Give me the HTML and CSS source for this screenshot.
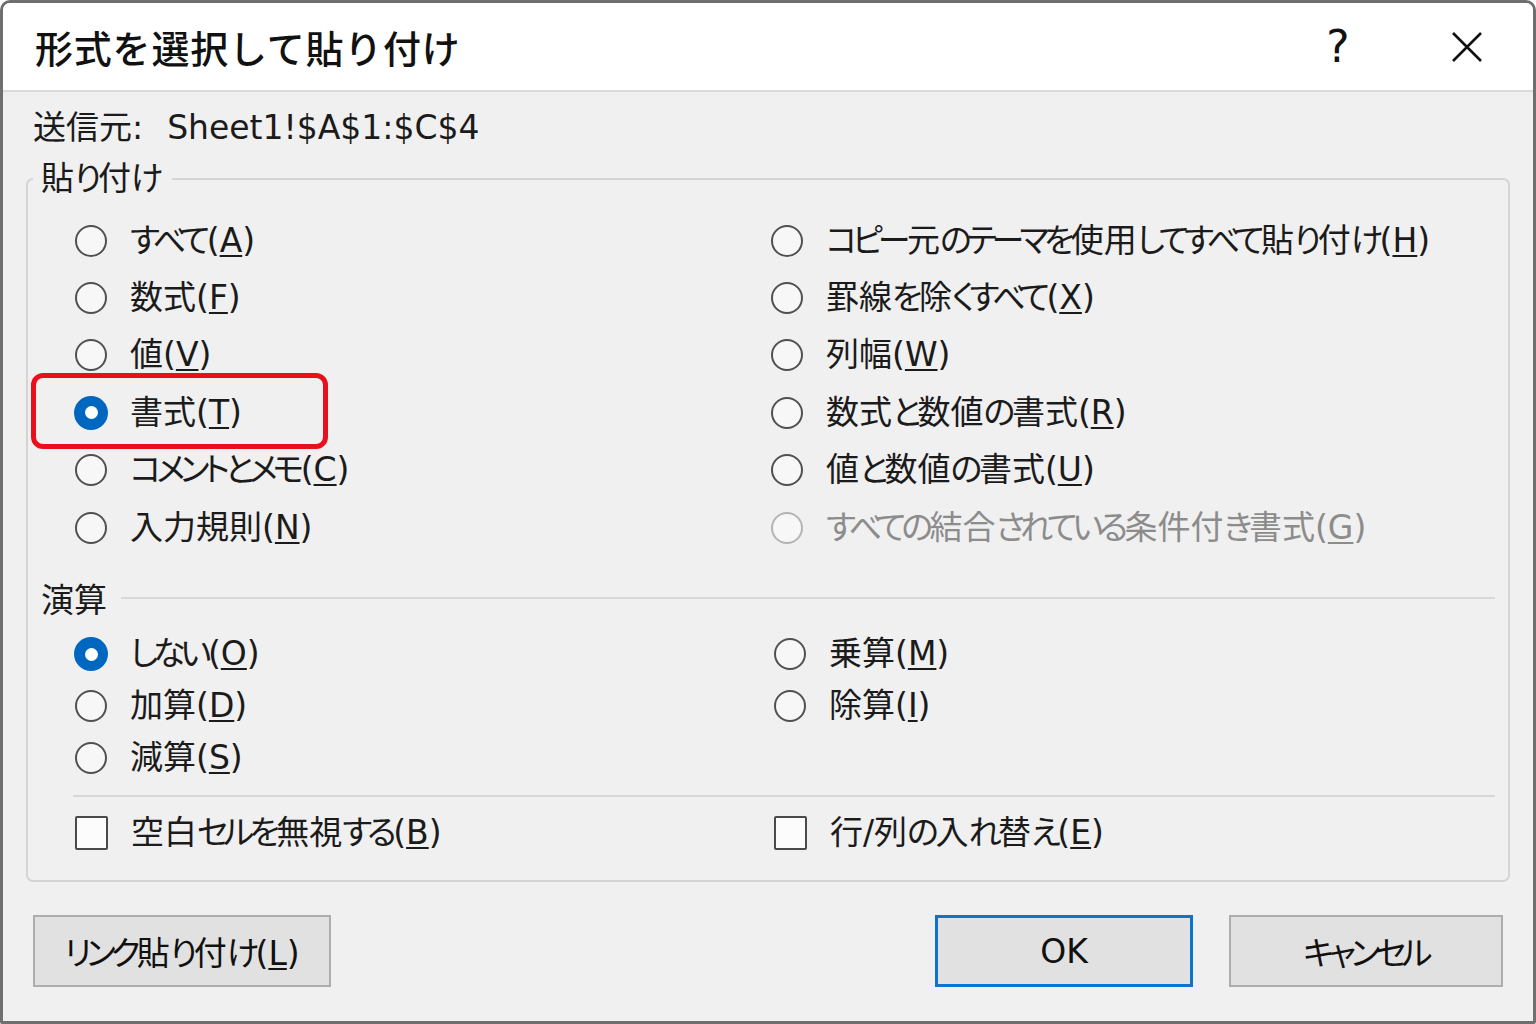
FILE: index.html
```html
<!DOCTYPE html>
<html lang="ja">
<head>
<meta charset="utf-8">
<title>形式を選択して貼り付け</title>
<link rel="stylesheet" href="styles.css">
</head>
<body>
<div class="dialog">
  <div class="titlebar">
    <div class="title">形式を選択して貼り付け</div>
    <div class="title-btns">
      <span class="help">?</span>
      <span class="close"><svg width="32" height="32" viewBox="0 0 32 32"><path d="M2 2 L30 30 M30 2 L2 30" stroke="#111" stroke-width="2.6" fill="none"/></svg></span>
    </div>
  </div>
  <div class="body">
    <div class="source"><span>送信元:</span><span class="src-val">Sheet1!$A$1:$C$4</span></div>
    <fieldset class="group">
      <legend>貼<span class="k">り</span>付<span class="k">け</span></legend>
      <div class="grid paste">
        <label class="opt"><span class="radio"></span><span class="txt"><span class="k">すべて</span>(<u>A</u>)</span></label>
        <label class="opt"><span class="radio"></span><span class="txt">数式(<u>F</u>)</span></label>
        <label class="opt"><span class="radio"></span><span class="txt">値(<u>V</u>)</span></label>
        <label class="opt marked"><span class="radio on"></span><span class="txt">書式(<u>T</u>)</span><span class="highlight"></span></label>
        <label class="opt"><span class="radio"></span><span class="txt"><span class="k">コメントとメモ</span>(<u>C</u>)</span></label>
        <label class="opt"><span class="radio"></span><span class="txt">入力規則(<u>N</u>)</span></label>
        <label class="opt"><span class="radio"></span><span class="txt"><span class="k">コピー</span>元<span class="k">のテーマを</span>使用<span class="k">してすべて</span>貼<span class="k">り</span>付<span class="k">け</span>(<u>H</u>)</span></label>
        <label class="opt"><span class="radio"></span><span class="txt">罫線<span class="k">を</span>除<span class="k">くすべて</span>(<u>X</u>)</span></label>
        <label class="opt"><span class="radio"></span><span class="txt">列幅(<u>W</u>)</span></label>
        <label class="opt"><span class="radio"></span><span class="txt">数式<span class="k">と</span>数値<span class="k">の</span>書式(<u>R</u>)</span></label>
        <label class="opt"><span class="radio"></span><span class="txt">値<span class="k">と</span>数値<span class="k">の</span>書式(<u>U</u>)</span></label>
        <label class="opt disabled"><span class="radio"></span><span class="txt"><span class="k">すべての</span>結合<span class="k">されている</span>条件付<span class="k">き</span>書式(<u>G</u>)</span></label>
      </div>
      <div class="section-head"><span>演算</span><span class="rule"></span></div>
      <div class="grid ops">
        <label class="opt"><span class="radio on"></span><span class="txt"><span class="k">しない</span>(<u>O</u>)</span></label>
        <label class="opt"><span class="radio"></span><span class="txt">乗算(<u>M</u>)</span></label>
        <label class="opt"><span class="radio"></span><span class="txt">加算(<u>D</u>)</span></label>
        <label class="opt"><span class="radio"></span><span class="txt">除算(<u>I</u>)</span></label>
        <label class="opt"><span class="radio"></span><span class="txt">減算(<u>S</u>)</span></label>
      </div>
      <div class="sep"></div>
      <div class="grid checks">
        <label class="opt"><span class="check"></span><span class="txt">空白<span class="k">セルを</span>無視<span class="k">する</span>(<u>B</u>)</span></label>
        <label class="opt"><span class="check"></span><span class="txt">行/列<span class="k">の</span>入<span class="k">れ</span>替<span class="k">え</span>(<u>E</u>)</span></label>
      </div>
    </fieldset>
  </div>
  <div class="footer">
    <button class="btn link"><span class="k">リンク</span>貼<span class="k">り</span>付<span class="k">け</span>(<u>L</u>)</button>
    <span class="spacer"></span>
    <button class="btn ok">OK</button>
    <button class="btn cancel"><span class="k">キャンセル</span></button>
  </div>
</div>
</body>
</html>
```

FILE: styles.css
```css
* { box-sizing: border-box; }
html, body { margin: 0; padding: 0; }
body {
  width: 1536px;
  height: 1024px;
  background: #ffffff;
  font-family: "DejaVu Sans", "Noto Sans CJK JP", sans-serif;
  font-feature-settings: "palt";
  color: #1b1b1b;
  overflow: hidden;
}
.k { letter-spacing: -5px; margin-right: 1.5px; }
.dialog {
  width: 1536px;
  height: 1024px;
  border: 3px solid #6f6f6f;
  border-radius: 10px 10px 2px 2px;
  background: #f0f0f0;
  display: flex;
  flex-direction: column;
  overflow: hidden;
}
.titlebar {
  height: 89px;
  background: #ffffff;
  border-bottom: 2px solid #dadada;
  display: flex;
  align-items: center;
  justify-content: space-between;
  padding-left: 32px;
  flex: none;
}
.title {
  font-family: "Noto Sans CJK JP", sans-serif;
  font-size: 38px;
  font-weight: 500;
  font-feature-settings: normal;
  letter-spacing: 0.8px;
  color: #111;
  line-height: 1;
}
.title-btns {
  display: flex;
  align-items: center;
}
.help {
  font-family: "DejaVu Sans", sans-serif;
  font-size: 44px;
  color: #111;
  width: 40px;
  text-align: center;
  margin-right: 93px;
  line-height: 1;
}
.close {
  display: flex;
  width: 32px;
  height: 32px;
  margin-right: 50px;
}
.body {
  flex: none;
}
.source {
  height: 40px;
  margin-top: 16px;
  padding-left: 30px;
  font-size: 33px;
  line-height: 40px;
  display: flex;
}
.src-val {
  margin-left: 24px;
}
.group {
  margin: 13px 23px 0 23px;
  padding: 15px 0 21px 0;
  border: 2px solid #d4d4d4;
  border-radius: 7px;
  min-width: 0;
}
.group legend {
  font-size: 33px;
  line-height: 36px;
  padding: 0 12px 0 8px;
  margin-left: 5px;
}
.grid {
  display: grid;
  padding-left: 47px;
  font-size: 33px;
}
.paste {
  grid-template-columns: 696px 1fr;
  grid-template-rows: repeat(6, 57.4px);
  grid-auto-flow: column;
}
.ops {
  grid-template-columns: 699px 1fr;
  grid-auto-rows: 52px;
}
.checks {
  grid-template-columns: 699px 1fr;
  grid-auto-rows: 52px;
  margin-top: 10px;
}
.opt {
  display: flex;
  align-items: center;
  gap: 23px;
  line-height: 1;
  white-space: nowrap;
}
.txt { margin-top: -1px; }
.opt u, .btn u {
  text-decoration-thickness: 2px;
  text-underline-offset: 3px;
}
.radio {
  flex: none;
  width: 32px;
  height: 32px;
  border-radius: 50%;
  border: 2px solid #505050;
  background: #f7f7f7;
  position: relative;
}
.radio.on {
  width: 34px;
  height: 34px;
  margin-left: -1px;
  margin-right: -1px;
  border: none;
  background: #0067c0;
}
.radio.on::after {
  content: "";
  position: absolute;
  left: 10.5px;
  top: 10.5px;
  width: 13px;
  height: 13px;
  border-radius: 50%;
  background: #ffffff;
}
.check {
  flex: none;
  width: 33px;
  height: 34px;
  border: 2px solid #4a4a4a;
  border-radius: 2px;
  background: #fcfcfc;
}
.disabled { color: #8c8c8c; }
.disabled .radio { border-color: #b4b4b4; }
.marked { position: relative; }
.highlight {
  position: absolute;
  left: -44px;
  top: -11px;
  width: 297px;
  height: 76px;
  border: 5px solid #e8101c;
  border-radius: 12px;
  pointer-events: none;
}
.section-head {
  display: flex;
  align-items: center;
  height: 40px;
  margin-top: 22px;
  margin-bottom: 10px;
  padding-left: 13px;
  padding-right: 13px;
  font-size: 33px;
}
.section-head .rule {
  flex: 1;
  height: 2px;
  background: #d7d7d7;
  margin-left: 14px;
}
.sep {
  height: 2px;
  background: #d7d7d7;
  margin: 11px 13px 0 45px;
}
.footer {
  display: flex;
  align-items: flex-start;
  padding: 33px 30px 0 30px;
}
.spacer { flex: 1; }
.btn {
  height: 72px;
  background: #e1e1e1;
  border: 2px solid #adadad;
  font-family: "DejaVu Sans", "Noto Sans CJK JP", sans-serif;
  font-feature-settings: "palt";
  font-size: 33px;
  color: #111;
  padding: 0;
  border-radius: 0;
}
.link { width: 298px; }
.ok {
  width: 258px;
  border: 3px solid #0a74d1;
  margin-right: 36px;
}
.cancel { width: 274px; }
```
